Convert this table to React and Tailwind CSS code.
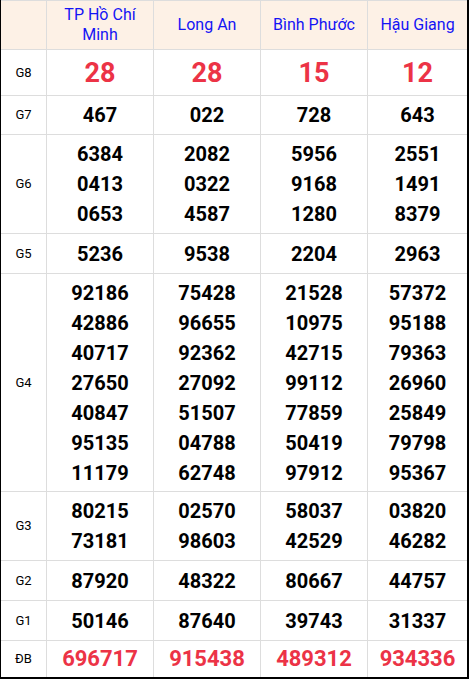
import React from 'react';

const PROVINCES = ['TP Hồ Chí Minh', 'Long An', 'Bình Phước', 'Hậu Giang'];

// each row: label, kind, values per province (array of lines)
const ROWS = [
  { label: 'G8', kind: 'g8', values: [['28'], ['28'], ['15'], ['12']] },
  { label: 'G7', values: [['467'], ['022'], ['728'], ['643']] },
  {
    label: 'G6',
    values: [
      ['6384', '0413', '0653'],
      ['2082', '0322', '4587'],
      ['5956', '9168', '1280'],
      ['2551', '1491', '8379'],
    ],
  },
  { label: 'G5', values: [['5236'], ['9538'], ['2204'], ['2963']] },
  {
    label: 'G4',
    values: [
      ['92186', '42886', '40717', '27650', '40847', '95135', '11179'],
      ['75428', '96655', '92362', '27092', '51507', '04788', '62748'],
      ['21528', '10975', '42715', '99112', '77859', '50419', '97912'],
      ['57372', '95188', '79363', '26960', '25849', '79798', '95367'],
    ],
  },
  {
    label: 'G3',
    values: [
      ['80215', '73181'],
      ['02570', '98603'],
      ['58037', '42529'],
      ['03820', '46282'],
    ],
  },
  { label: 'G2', values: [['87920'], ['48322'], ['80667'], ['44757']] },
  { label: 'G1', values: [['50146'], ['87640'], ['39743'], ['31337']] },
  { label: 'ĐB', kind: 'db', values: [['696717'], ['915438'], ['489312'], ['934336']] },
];

const numClass = kind => {
  if (kind === 'g8') return 'text-[27px] font-bold text-[#ec3346] leading-[30px]';
  if (kind === 'db') return 'text-[22px] font-bold text-[#ec3346] leading-[30px]';
  return 'text-[20px] font-bold text-black leading-[30px]';
};

export default function App() {
  return (
    <div
      className="w-[469px] h-[679px] border-l border-r-2 border-b-2 border-black bg-white"
      style={{ fontFamily: 'Roboto, "Liberation Sans", sans-serif' }}
    >
      <div className="grid grid-cols-[45px_106px_106px_106px_99px] grid-rows-[48px_45px_38px_98px_39px_217px_68px_39px_39px_36px] gap-px bg-[#dddddd] pt-px h-full">
        {/* Header */}
        <div className="bg-[#fdf1e6]" />
        {PROVINCES.map(p => (
          <div
            key={p}
            className="bg-[#fdf1e6] flex items-center justify-center text-center text-[16px] leading-[20px] text-[#1414f5] px-2"
          >
            {p}
          </div>
        ))}

        {ROWS.map(row => (
          <React.Fragment key={row.label}>
            <div className="bg-white flex items-center justify-center text-[13px] text-black">
              {row.label}
            </div>
            {row.values.map((lines, i) => (
              <div key={i} className="bg-white flex flex-col items-center justify-center">
                {lines.map((n, j) => (
                  <span key={j} className={numClass(row.kind)}>
                    {n}
                  </span>
                ))}
              </div>
            ))}
          </React.Fragment>
        ))}
      </div>
    </div>
  );
}
